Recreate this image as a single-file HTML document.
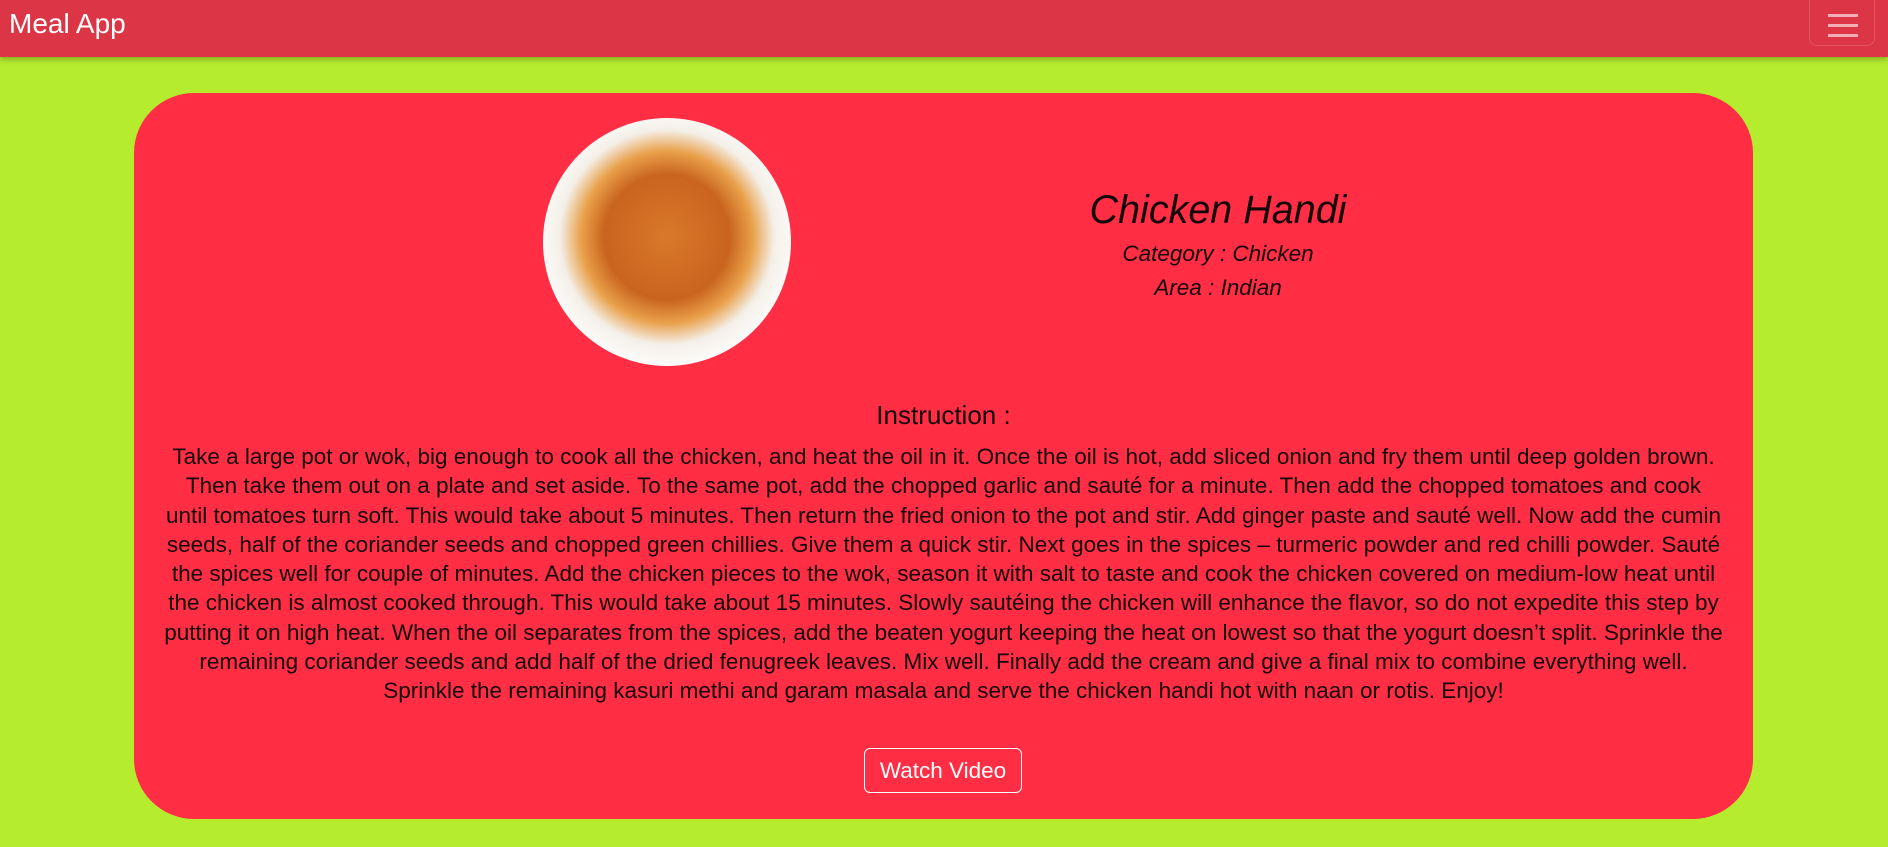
<!DOCTYPE html>
<html><head><meta charset="utf-8"><style>
html,body{margin:0;padding:0;}
body{width:1888px;height:847px;background:#b5ec2e;font-family:"Liberation Sans",sans-serif;position:relative;overflow:hidden;}
.nav{position:absolute;left:0;top:0;width:1888px;height:57px;background:#dc3545;box-shadow:0 2px 6px rgba(0,0,0,.3);}
.brand{position:absolute;left:9px;top:8px;font-size:28px;color:#fff;}
.tog{position:absolute;left:1809px;top:-8px;width:66px;height:54px;border:1px solid rgba(255,255,255,.15);border-radius:8px;box-sizing:border-box;}
.tog i{position:absolute;left:18px;width:30px;height:3px;background:rgba(255,255,255,.6);}
.card{position:absolute;left:134px;top:93px;width:1619px;height:726px;background:#ff2e44;border-radius:60px;}
.img{position:absolute;left:409px;top:25px;width:248px;height:248px;border-radius:50%;overflow:hidden;background:radial-gradient(circle at 50% 48%,#d9782a 0,#c9641e 35%,#e9a04a 48%,#f4efe8 60%,#fff 75%,#e8dde0 100%);}
.title{position:absolute;left:784px;width:600px;text-align:center;color:#15060a;font-style:italic;}
.instr{position:absolute;left:0;width:1619px;top:307px;text-align:center;font-size:26px;color:#15060a;}
.para{position:absolute;left:0;width:1619px;top:349px;text-align:center;font-size:22.5px;line-height:29.3px;color:#15060a;white-space:nowrap;}
.btn{position:absolute;left:730px;top:655px;width:158px;height:45px;border:1px solid #fff;border-radius:6px;box-sizing:border-box;color:#fff;font-size:22.5px;text-align:center;line-height:43px;}
</style></head><body>
<div class="nav"><div class="brand">Meal App</div>
<div class="tog"><i style="top:21px"></i><i style="top:31px"></i><i style="top:41px"></i></div></div>
<div class="card">
<div class="img"></div>
<div class="title" style="top:95px;font-size:39.5px;">Chicken Handi</div>
<div class="title" style="top:148px;font-size:22.5px;">Category : Chicken</div>
<div class="title" style="top:182px;font-size:22.5px;">Area : Indian</div>
<div class="instr">Instruction :</div>
<div class="para">Take a large pot or wok, big enough to cook all the chicken, and heat the oil in it. Once the oil is hot, add sliced onion and fry them until deep golden brown.<br>
Then take them out on a plate and set aside. To the same pot, add the chopped garlic and sauté for a minute. Then add the chopped tomatoes and cook<br>
until tomatoes turn soft. This would take about 5 minutes. Then return the fried onion to the pot and stir. Add ginger paste and sauté well. Now add the cumin<br>
seeds, half of the coriander seeds and chopped green chillies. Give them a quick stir. Next goes in the spices – turmeric powder and red chilli powder. Sauté<br>
the spices well for couple of minutes. Add the chicken pieces to the wok, season it with salt to taste and cook the chicken covered on medium-low heat until<br>
the chicken is almost cooked through. This would take about 15 minutes. Slowly sautéing the chicken will enhance the flavor, so do not expedite this step by<br>
putting it on high heat. When the oil separates from the spices, add the beaten yogurt keeping the heat on lowest so that the yogurt doesn’t split. Sprinkle the<br>
remaining coriander seeds and add half of the dried fenugreek leaves. Mix well. Finally add the cream and give a final mix to combine everything well.<br>
Sprinkle the remaining kasuri methi and garam masala and serve the chicken handi hot with naan or rotis. Enjoy!</div>
<div class="btn">Watch Video</div>
</div>
</body></html>
